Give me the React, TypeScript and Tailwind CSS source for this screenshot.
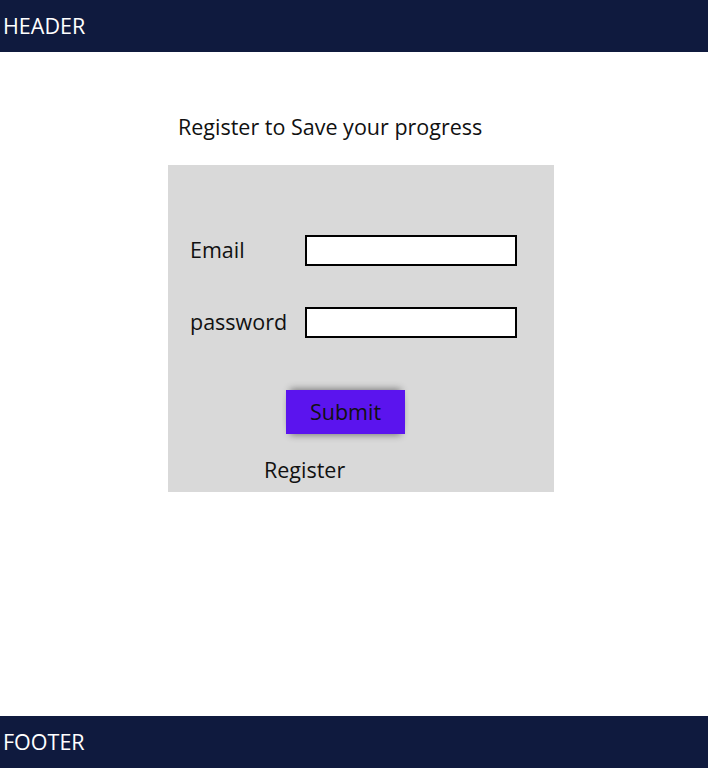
import React from "react";

export default function App() {
  return (
    <div className="flex min-h-[768px] flex-col bg-white text-[#111111]" style={{ fontFamily: '"Open Sans", "Noto Sans", sans-serif' }}>
      <header className="flex h-[52px] items-center bg-[#0f1a3e] px-[3px] text-[21.5px] text-white">HEADER</header>
      <main className="flex-1 pt-[61px]">
        <h1 className="ml-[178px] text-[21.5px] leading-[28px] font-normal">Register to Save your progress</h1>
        <div className="ml-[168px] mt-[24px] h-[327px] w-[386px] bg-[#d9d9d9] pt-[70px]">
          <div className="flex h-[30px] items-center">
            <span className="w-[137px] pl-[22px] text-[21.5px]">Email</span>
            <input className="h-[31px] w-[212px] border-2 border-black bg-white" />
          </div>
          <div className="mt-[42px] flex h-[30px] items-center">
            <span className="w-[137px] pl-[22px] text-[21.5px]">password</span>
            <input type="password" className="h-[31px] w-[212px] border-2 border-black bg-white" />
          </div>
          <button className="ml-[118px] mt-[53px] flex h-[44px] w-[119px] items-center justify-center bg-[#5b14ee] text-[21.5px] text-[#111111] shadow-[0_-5px_7px_-4px_rgba(0,0,0,0.45),0_5px_7px_-4px_rgba(0,0,0,0.45)]">Submit</button>
          <div className="ml-[96px] mt-[22px] text-[21.5px] leading-[28px]">Register</div>
        </div>
      </main>
      <footer className="flex h-[52px] items-center bg-[#0f1a3e] px-[3px] text-[21.5px] text-white">FOOTER</footer>
    </div>
  );
}
